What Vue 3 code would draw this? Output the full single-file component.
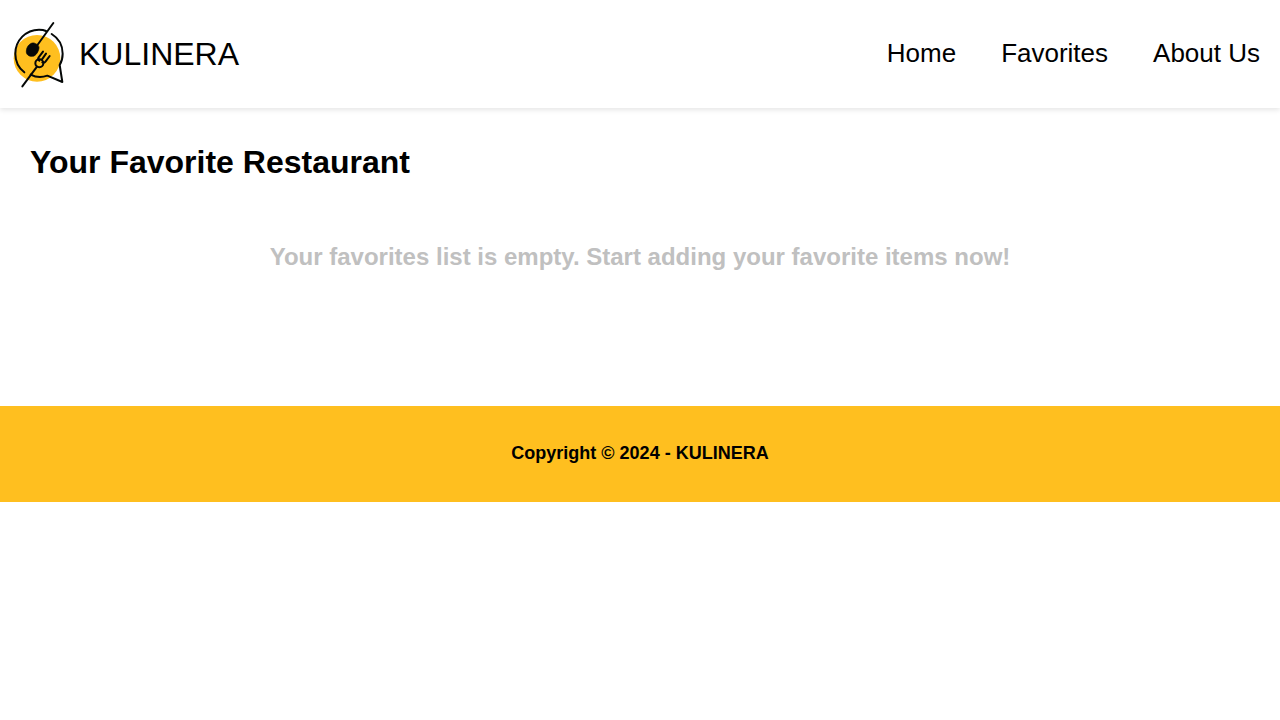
<script setup>
const links = ['Home', 'Favorites', 'About Us']
</script>

<template>
  <div class="page">
    <header class="bar">
      <a class="brand" href="#">
        <svg class="logo" viewBox="36 30 162 204" aria-hidden="true">
          <circle cx="111" cy="145" r="70" fill="#ffbf1f" />
          <g fill="none" stroke="#050807" stroke-width="6" stroke-linecap="round" stroke-linejoin="round">
            <path d="M73 187C54 172 46 152 46 131C46 91 78 59 117 59C125 59 132 60 138 63" />
            <path d="M155 72C176 85 188 106 188 131C188 144 185 155 179 165L187 216L142 197C126 203 107 202 92 194" />
            <path d="M160 39L108 111" />
            <path d="M67 229L111 170" />
            <circle cx="118" cy="160" r="12" />
            <path d="M129 125L116 142Q112 148 118 152M138 131L126 148M149 138L137 154Q133 160 127 157" />
          </g>
          <path d="M97 99C104 97 118 106 117 113C117 122 108 139 97 139C86 140 78 133 79 123C80 110 88 101 97 99Z" fill="#050807" stroke="#050807" stroke-width="2" />
        </svg>
        <span>KULINERA</span>
      </a>
      <nav class="nav" aria-label="Main">
        <a v-for="link in links" :key="link" href="#">{{ link }}</a>
      </nav>
    </header>
    <main class="content">
      <h1>Your Favorite Restaurant</h1>
      <p class="empty">Your favorites list is empty. Start adding your favorite items now!</p>
    </main>
    <footer class="footer">
      <p>Copyright © 2024 - KULINERA</p>
    </footer>
  </div>
</template>

<style>
body {
  margin: 0;
  background: #fff;
}
</style>

<style scoped>
.page {
  font-family: "Liberation Sans", Arial, sans-serif;
  color: #000;
}
.bar {
  display: flex;
  align-items: center;
  justify-content: space-between;
  padding: 20px 20px 20px 12px;
  box-shadow: 0 2px 5px rgba(0, 0, 0, 0.1);
}
.brand {
  display: flex;
  align-items: center;
  gap: 13px;
  color: #000;
  font-size: 32px;
  line-height: 36px;
  text-decoration: none;
}
.logo {
  width: 54px;
  height: 68px;
}
.nav {
  display: flex;
  gap: 45px;
}
.nav a {
  padding-bottom: 2px;
  color: #000;
  font-size: 26px;
  line-height: 30px;
  text-decoration: none;
}
.content {
  padding: 36px 30px 136px;
}
h1 {
  margin: 0;
  font-size: 32px;
  line-height: 36px;
}
.empty {
  margin: 64px 0 0;
  color: #c0c0c0;
  font-size: 24px;
  font-weight: 700;
  line-height: 26px;
  text-align: center;
}
.footer {
  padding: 36px 20px 38px;
  background: #ffbf1f;
}
.footer p {
  margin: 0;
  font-size: 18px;
  font-weight: 700;
  line-height: 22px;
  text-align: center;
}
</style>
